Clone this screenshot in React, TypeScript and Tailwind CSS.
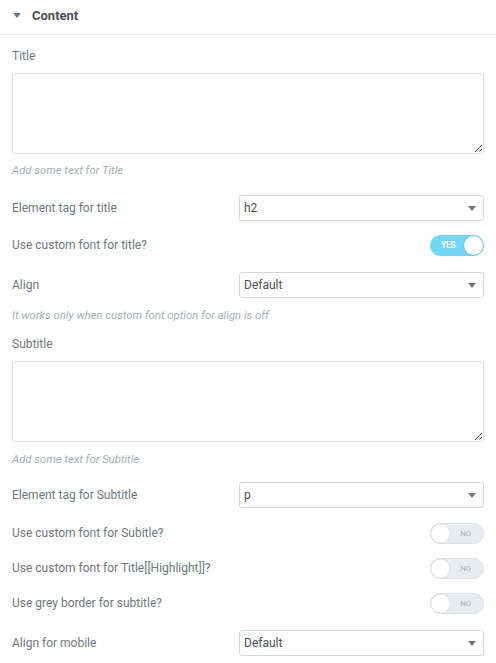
import React from 'react';

const font = { fontFamily: 'Roboto, Arial, sans-serif' };

const Caret = () => (
  <svg width="8" height="5" viewBox="0 0 8 5" className="shrink-0">
    <path d="M0 0h8L4 5z" fill="#6d7882" />
  </svg>
);

const Select = ({ value }: { value: string }) => (
  <div className="w-[245px] h-[26px] border border-[#d5dadf] rounded-[3px] bg-white flex items-center justify-between pl-[4px] pr-[7px] text-[12px] leading-[14px] text-[#495157]">
    <span>{value}</span>
    <Caret />
  </div>
);

const Toggle = ({ on }: { on: boolean }) =>
  on ? (
    <div className="w-[54px] h-[21px] rounded-full bg-[#71d7f7] flex items-center justify-between pl-[11px] pr-[1px] leading-none">
      <span className="text-[8.5px] font-bold text-white tracking-tight">YES</span>
      <span className="w-[19px] h-[19px] rounded-full bg-white shadow-[0_0_2px_rgba(0,0,0,0.3)]" />
    </div>
  ) : (
    <div className="w-[54px] h-[21px] rounded-full bg-[#e9ecef] border border-[#dde1e5] flex items-center justify-between pl-0 pr-[12px] leading-none">
      <span className="w-[19px] h-[19px] rounded-full bg-white shadow-[0_0_1px_rgba(0,0,0,0.3)]" />
      <span className="text-[8px] text-[#a4afb7] tracking-tight">NO</span>
    </div>
  );

const Label = ({ children, className = '' }: { children: React.ReactNode; className?: string }) => (
  <div className={`text-[12px] text-[#6d7882] leading-[15px] ${className}`}>{children}</div>
);

const Hint = ({ children, className = '' }: { children: React.ReactNode; className?: string }) => (
  <div className={`text-[11.3px] italic text-[#a4afb7] leading-[14px] ${className}`}>{children}</div>
);

const Row = ({ label, className = '', children }: { label: string; className?: string; children: React.ReactNode }) => (
  <div className={`flex items-center justify-between ${className}`}>
    <Label>{label}</Label>
    {children}
  </div>
);

export default function App() {
  return (
    <div className="w-[496px] h-[663px] bg-white overflow-hidden leading-[15px]" style={font}>
      <div className="h-[35px] border-b border-[#e6e9ec] flex items-center pl-[13px] gap-[11px] pb-[4px]">
        <Caret />
        <span className="text-[13px] font-bold text-[#495157]">Content</span>
      </div>

      <div className="px-3">
        <Label className="mt-[14px]">Title</Label>
        <textarea className="mt-[9px] block w-full h-[81px] border border-[#dde1e5] rounded-[3px] bg-white" />
        <Hint className="mt-[10px]">Add some text for Title</Hint>

        <Row label="Element tag for title" className="mt-[17px]">
          <Select value="h2" />
        </Row>
        <Row label="Use custom font for title?" className="mt-[14px]">
          <Toggle on />
        </Row>
        <Row label="Align" className="mt-[16px]">
          <Select value="Default" />
        </Row>
        <Hint className="mt-[11px]">It works only when custom font option for align is off</Hint>

        <Label className="mt-[14px]">Subtitle</Label>
        <textarea className="mt-[9px] block w-full h-[81px] border border-[#dde1e5] rounded-[3px] bg-white" />
        <Hint className="mt-[11px]">Add some text for Subtitle</Hint>

        <Row label="Element tag for Subtitle" className="mt-[15px]">
          <Select value="p" />
        </Row>
        <Row label="Use custom font for Subitle?" className="mt-[15px]">
          <Toggle on={false} />
        </Row>
        <Row label="Use custom font for Title[[Highlight]]?" className="mt-[14px]">
          <Toggle on={false} />
        </Row>
        <Row label="Use grey border for subtitle?" className="mt-[14px]">
          <Toggle on={false} />
        </Row>
        <Row label="Align for mobile" className="mt-[16px]">
          <Select value="Default" />
        </Row>
      </div>
    </div>
  );
}
